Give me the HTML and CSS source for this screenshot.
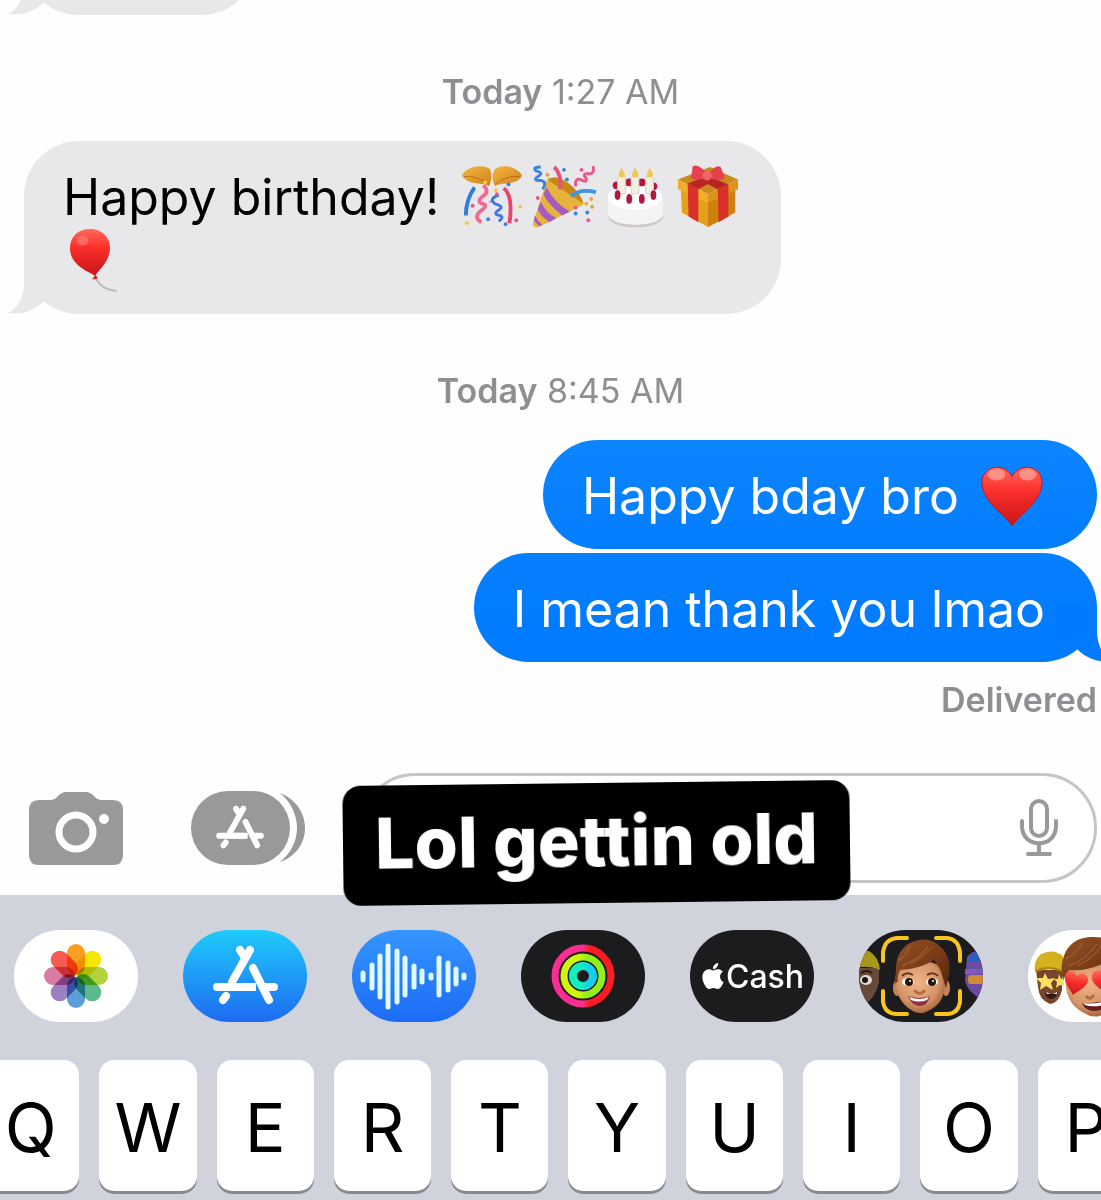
FILE: index.html
```html
<!DOCTYPE html>
<html lang="en">
<head>
  <meta charset="UTF-8" />
  <meta name="viewport" content="width=device-width, initial-scale=1.0"/>
  <title>Messages</title>
  <link rel="stylesheet" href="styles.css">
</head>
<body>
  <!-- Shared shapes -->
  <svg class="defs" width="0" height="0" aria-hidden="true">
    <symbol id="tail" viewBox="0 0 56 56">
      <path d="M16 0V24C16 40 10 50 0 55C14 57 26 53 36 43L56 30V0Z"/>
    </symbol>
    <symbol id="appstore" viewBox="30 15 65 60">
      <g fill="none" stroke="currentColor" stroke-width="8" stroke-linecap="round">
        <path d="M67 20L49 52M57 20L62 28M43 66L40 70M70 38L86 70M34 57H68M82 57H91"/>
        <path stroke-linecap="butt" d="M49 57H73"/>
      </g>
    </symbol>
    <symbol id="heart" viewBox="0 0 66 66">
      <path d="M33 64C27 53 3 40 2 20C1 3 24-4 33 13C42-4 65 3 64 20C63 40 39 53 33 64Z"/>
    </symbol>
    <linearGradient id="gold" x1="0" y1="0" x2="1" y2="1">
      <stop offset="0" stop-color="#f5b63f"/><stop offset="1" stop-color="#d0801c"/>
    </linearGradient>
    <linearGradient id="red" x1="0" y1="0" x2="0" y2="1">
      <stop offset="0" stop-color="#ff6a5c"/><stop offset=".4" stop-color="#fb2f2c"/><stop offset="1" stop-color="#c81518"/>
    </linearGradient>
    <radialGradient id="skin" cx=".45" cy=".4" r=".6">
      <stop offset="0" stop-color="#eeb488"/><stop offset=".7" stop-color="#d59468"/><stop offset="1" stop-color="#a9663d"/>
    </radialGradient>
    <linearGradient id="hair" x1="0" y1="0" x2="1" y2="1">
      <stop offset="0" stop-color="#935225"/><stop offset=".5" stop-color="#7b3d19"/><stop offset="1" stop-color="#54260f"/>
    </linearGradient>
  </svg>

  <div class="phone">
    <main class="thread">
      <div class="bubble received cut">
        <svg class="tail"><use href="#tail"/></svg>
      </div>

      <p class="time"><b>Today</b> 1:27 AM</p>

      <div class="bubble received">
        Happy birthday!
        <svg class="emoji" viewBox="0 0 66 66" role="img" aria-label="confetti ball">
          <path d="M2 11C5 3 20-2 31 4Q34 12 30 22C24 17 9 22 2 11Z" fill="url(#gold)"/>
          <path d="M64 11C60 3 46-2 36 4Q31 12 36 22C42 17 58 22 64 11Z" fill="url(#gold)"/>
          <path d="M4 12Q15 10 30 20M62 12Q49 10 36 20" fill="none" stroke="#b66e18" stroke-width="1"/>
          <g fill="none" stroke-width="4">
            <path d="M15 23Q6 36 6 52" stroke="#2e7de0"/>
            <path d="M45 24Q55 31 51 60" stroke="#e9426d"/>
            <path d="M24 21Q31 27 24 32Q16 38 24 40Q29 42 22 47Q13 54 22 59" stroke="#ef6b94"/>
            <path d="M40 31Q29 35 36 40Q47 43 39 47Q34 51 41 52Q46 54 40 58" stroke="#3c78dd" stroke-width="3"/>
          </g>
          <g fill="#f4c83d"><circle cx="26" cy="18" r="2"/><circle cx="7" cy="60" r="2"/><circle cx="37" cy="26" r="2"/><circle cx="62" cy="43" r="2"/></g>
          <g fill="#e85585"><circle cx="38" cy="30" r="2"/><circle cx="13" cy="42" r="2"/><circle cx="58" cy="57" r="2"/><circle cx="31" cy="38" r="1"/></g>
          <g fill="#3884e7"><circle cx="50" cy="20" r="2"/><circle cx="29" cy="56" r="2"/><circle cx="47" cy="61" r="2"/></g>
        </svg><svg class="emoji" viewBox="0 0 66 66" role="img" aria-label="party popper">
          <path d="M1 60L16 14Q20 10 37 24Q54 35 53 41L7 64Q1 66 1 60Z" fill="#e6b33c"/>
          <path d="M17 16L53 40Q51 29 38 19Q23 8 17 16Z" fill="#c88816"/>
          <path d="M12 30Q15 39 31 52L39 48Q24 40 15 23ZM6 46Q8 52 18 59L25 55Q15 50 9 38ZM2 56Q3 60 8 63L11 62Q6 58 3 52Z" fill="#a45bc4"/>
          <g fill="none" stroke-width="4">
            <path d="M23 2Q31 10 29 25" stroke="#e8517a"/>
            <path d="M9 2Q0 2 4 6Q13 8 6 12Q0 16 9 16Q16 17 11 25" stroke="#3b82e1" stroke-width="3"/>
            <path d="M40 32Q50 24 66 28" stroke="#3d94e0"/>
            <path d="M63 1Q65 10 58 9Q51 8 56 14Q57 19 50 15Q44 13 45 22" stroke="#e65a88" stroke-width="3"/>
          </g>
          <g fill="#e65a88"><circle cx="51" cy="5" r="2"/><circle cx="6" cy="34" r="2"/><circle cx="45" cy="44" r="2"/><circle cx="58" cy="57" r="2"/></g>
          <g fill="#3b82e1"><circle cx="33" cy="5" r="2"/><circle cx="36" cy="15" r="2"/><circle cx="57" cy="49" r="2"/><circle cx="45" cy="50" r="2"/></g>
          <g fill="#e6a63c"><circle cx="16" cy="10" r="2"/><circle cx="56" cy="40" r="2"/><circle cx="62" cy="43" r="2"/><circle cx="61" cy="35" r="2"/></g>
        </svg><svg class="emoji" viewBox="0 0 66 66" role="img" aria-label="birthday cake">
          <path d="M4 34V53C7 68 58 68 61 53V34Z" fill="#cfcaca"/>
          <path d="M4 34V51C7 65 58 65 61 51V34Z" fill="#f5f3f3"/>
          <ellipse cx="32" cy="33" rx="28" ry="13" fill="#fff"/>
          <g fill="#b51543"><circle cx="13" cy="21" r="4"/><circle cx="26" cy="18" r="4"/><circle cx="39" cy="18" r="4"/><circle cx="51" cy="22" r="4"/></g>
          <g fill="#f2efe0" stroke="#d4d0bf" stroke-width="1"><rect x="14" y="12" width="8" height="18" rx="2"/><rect x="28" y="12" width="8" height="18" rx="2"/><rect x="43" y="12" width="8" height="18" rx="2"/></g>
          <g fill="#efc94f"><path d="M18 3Q25 12 18 13Q12 12 18 3ZM32 3Q39 12 32 13Q26 12 32 3ZM47 3Q54 12 47 13Q41 12 47 3Z"/></g>
          <g fill="#b51543"><ellipse cx="14" cy="31" rx="3" ry="5"/><ellipse cx="26" cy="35" rx="3" ry="5"/><ellipse cx="39" cy="35" rx="3" ry="5"/><ellipse cx="51" cy="31" rx="3" ry="5"/></g>
        </svg><svg class="emoji" viewBox="0 0 66 66" role="img" aria-label="wrapped gift">
          <path d="M5 23L33 36V64L6 49ZM33 36L61 23V49L33 64Z" fill="#e5a01e"/>
          <path d="M33 36L61 23V49L33 64Z" fill="#cf8110"/>
          <path d="M2 15L35 2L64 15L33 30Z" fill="#cb8a1c"/>
          <path d="M2 15L33 30V39L2 25Z" fill="#f2ae2a"/><path d="M33 30L64 15V25L33 39Z" fill="#dc941c"/>
          <path d="M12 19L23 25V59L13 53ZM43 25L54 20V53L44 59Z" fill="#d93129"/>
          <path d="M12 19L43 7L50 10L23 25ZM22 7L54 20L43 25L18 12Z" fill="#b82624"/>
          <path d="M33 10C25-1 15-2 17 5L15 14Q24 17 33 12Q42 18 50 14L47 4C45-2 37 3 33 10Z" fill="#e6404a"/>
          <ellipse cx="32" cy="11" rx="5" ry="5" fill="#f2626a"/>
        </svg><svg class="emoji" viewBox="0 0 66 66" role="img" aria-label="balloon">
          <path d="M26 50C32 61 40 63 48 64" fill="none" stroke="#b8b9bc" stroke-width="2"/>
          <path d="M26 47L23 52L29 51Z" fill="#d3232d"/>
          <path d="M26 48C19 44 0 37 0 20C0 7 9 0 21 0C34 0 43 10 41 23C39 35 31 41 26 48Z" fill="url(#red)"/>
          <ellipse cx="13" cy="12" rx="6" ry="5" fill="#ff8d89" opacity=".5"/>
        </svg>
        <svg class="tail"><use href="#tail"/></svg>
      </div>

      <p class="time"><b>Today</b> 8:45 AM</p>

      <div class="bubble sent first">
        Happy bday bro
        <svg class="emoji" viewBox="0 0 66 66" role="img" aria-label="red heart">
          <use href="#heart" fill="url(#red)" stroke="#c71419" stroke-width="1"/>
          <ellipse cx="17" cy="11" rx="9" ry="6" fill="#ffb6ac" opacity=".6"/><ellipse cx="49" cy="11" rx="9" ry="6" fill="#ffb6ac" opacity=".6"/>
        </svg>
      </div>
      <div class="bubble sent">
        I mean thank you lmao
        <svg class="tail"><use href="#tail"/></svg>
      </div>
      <p class="status">Delivered</p>
    </main>

    <div class="compose">
      <button class="tool camera" aria-label="Camera">
        <svg width="95" height="73" viewBox="0 0 95 73">
          <path fill="#999" d="M10 8H21Q26 8 29 4Q33 0 37 0H57Q61 0 65 4Q68 8 73 8H84Q94 8 94 18V63Q94 73 84 73H10Q0 73 0 63V18Q0 8 10 8Z"/>
          <circle cx="47" cy="40" r="17" fill="none" stroke="#fff" stroke-width="7"/>
          <circle cx="75" cy="27" r="5" fill="#fff"/>
        </svg>
      </button>
      <button class="tool apps-toggle" aria-label="Apps">
        <svg width="114" height="74" viewBox="0 0 114 74">
          <rect width="99" height="74" rx="37" fill="#999"/>
          <path fill="#999" d="M89 2C104 8 114 21 114 37S104 66 89 71C99 63 106 51 106 37S99 10 89 2Z"/>
          <use href="#appstore" x="25" y="14" width="48" height="44" color="#fff"/>
        </svg>
      </button>
      <div class="field">
        <input type="text" aria-label="Message">
        <button class="mic" aria-label="Dictate">
          <svg width="38" height="58" viewBox="0 0 38 58" fill="none" stroke="#999" stroke-width="4" stroke-linecap="round">
            <rect x="11" y="2" width="16" height="35" rx="8"/>
            <path d="M2 22V27C2 50 36 50 36 27V22M19 45V55M8 55H30"/>
          </svg>
        </button>
      </div>
      <div class="caption">Lol gettin old</div>
    </div>

    <div class="keyboard">
      <div class="apps">
        <button class="app white" aria-label="Photos">
          <svg viewBox="0 0 124 92">
            <g class="petals" transform="translate(62 46)">
              <rect x="-9" y="-32" width="18" height="31" rx="9" fill="#fb9f22"/>
              <rect x="-9" y="-32" width="18" height="31" rx="9" fill="#f5e606" transform="rotate(45)"/>
              <rect x="-9" y="-32" width="18" height="31" rx="9" fill="#b3d33c" transform="rotate(90)"/>
              <rect x="-9" y="-32" width="18" height="31" rx="9" fill="#5cb98b" transform="rotate(135)"/>
              <rect x="-9" y="-32" width="18" height="31" rx="9" fill="#5a9fda" transform="rotate(180)"/>
              <rect x="-9" y="-32" width="18" height="31" rx="9" fill="#9a80c2" transform="rotate(225)"/>
              <rect x="-9" y="-32" width="18" height="31" rx="9" fill="#d87ba5" transform="rotate(270)"/>
              <rect x="-9" y="-32" width="18" height="31" rx="9" fill="#f65b50" transform="rotate(315)"/>
            </g>
          </svg>
        </button>
        <button class="app store" aria-label="App Store">
          <svg viewBox="0 0 124 92"><use href="#appstore" x="30" y="15" width="65" height="60" color="#fff"/></svg>
        </button>
        <button class="app audio" aria-label="Audio">
          <svg viewBox="0 0 124 92" fill="none" stroke="#dffaff" stroke-width="5" stroke-linecap="round">
            <path d="M11 43V50M20 35V58M28 26V67M36 16V77M45 21V72M53 28V65M62 36V57M70 41V52M79 45V48M87 28V65M96 33V60M104 39V54M112 45V48"/>
          </svg>
        </button>
        <button class="app dark" aria-label="Fitness">
          <svg viewBox="0 0 124 92" fill="none">
            <linearGradient id="move"><stop offset=".5" stop-color="#fb2d92"/><stop offset=".6" stop-color="#fb1d22"/></linearGradient>
            <linearGradient id="exercise"><stop offset=".4" stop-color="#cdf50e"/><stop offset=".6" stop-color="#93ee1b"/></linearGradient>
            <linearGradient id="stand"><stop offset=".4" stop-color="#12efbd"/><stop offset=".8" stop-color="#17cdeb"/></linearGradient>
            <circle cx="62" cy="46" r="28" stroke="url(#move)" stroke-width="7"/>
            <circle cx="62" cy="46" r="19" stroke="url(#exercise)" stroke-width="7"/>
            <circle cx="62" cy="46" r="10" stroke="url(#stand)" stroke-width="8"/>
          </svg>
        </button>
        <button class="app dark cash" aria-label="Apple Cash">
          <svg class="apple" viewBox="0 0 24 24" fill="#fff"><path d="M12.152 6.896c-.948 0-2.415-1.078-3.96-1.04-2.04.027-3.91 1.183-4.961 3.014-2.117 3.675-.546 9.103 1.519 12.09 1.013 1.454 2.208 3.09 3.792 3.039 1.52-.065 2.09-.987 3.935-.987 1.831 0 2.35.987 3.96.948 1.637-.026 2.676-1.48 3.676-2.948 1.156-1.688 1.636-3.325 1.662-3.415-.039-.013-3.182-1.221-3.22-4.857-.026-3.04 2.48-4.494 2.597-4.559-1.429-2.09-3.623-2.324-4.39-2.376-2-.156-3.675 1.09-4.61 1.09zM15.53 3.83c.843-1.012 1.4-2.427 1.245-3.83-1.207.052-2.662.805-3.532 1.818-.78.896-1.454 2.338-1.273 3.714 1.338.104 2.715-.688 3.559-1.701"/></svg>
          <span>Cash</span>
        </button>
        <button class="app dark" aria-label="Memoji">
          <svg viewBox="0 0 124 92">
            <!-- side faces -->
            <path d="M-12 38H20V52Q16 69 6 74L-10 66Z" fill="#674a39"/>
            <path d="M-10 39Q-4 20 10 21Q20 27 21 40Q8 34-10 39Z" fill="#a9971d"/>
            <ellipse cx="7" cy="50" rx="6" ry="5" fill="#ddd"/><circle cx="6" cy="50" r="3" fill="#231510"/>
            <path d="M2 43Q8 39 13 43" stroke="#2b1a11" stroke-width="2" fill="none"/>
            <path d="M108 27Q117 17 130 23V72Q110 66 106 51Z" fill="#6b4ca2"/>
            <path d="M108 32Q112 20 125 22V32Z" fill="#2860bf"/>
            <rect x="109" y="45" width="17" height="9" rx="3" fill="#cf8a35"/>
            <path d="M106 39H125V44H106Z" fill="#8259ba"/>
            <!-- main face -->
            <ellipse cx="38" cy="58" rx="4" ry="8" fill="#c78257"/><ellipse cx="87" cy="58" rx="4" ry="8" fill="#c78257"/>
            <path d="M37 38Q61 24 86 38V56Q85 74 69 81Q60 86 52 80Q38 71 37 54Z" fill="url(#skin)"/>
            <path d="M36 54Q35 48 37 42Q36 23 49 14Q68 4 81 16Q93 27 90 45L87 58L83 45Q82 39 75 30Q61 39 41 40Q38 46 39 51Z" fill="url(#hair)"/>
            <path d="M43 36Q61 29 69 16M52 34Q65 26 73 17M39 31Q47 26 51 16" fill="none" stroke="#aa6737" stroke-width="1"/>
            <path d="M43 46Q48 41 54 45M68 45Q74 41 79 46" stroke="#68351b" stroke-width="2" fill="none"/>
            <ellipse cx="49" cy="52" rx="6" ry="4" fill="#fff"/><ellipse cx="73" cy="52" rx="6" ry="4" fill="#fff"/>
            <circle cx="50" cy="52" r="4" fill="#28150d"/><circle cx="73" cy="52" r="4" fill="#28150d"/>
            <circle cx="51" cy="51" r="1" fill="#fff"/><circle cx="74" cy="51" r="1" fill="#fff"/>
            <path d="M56 61Q61 66 65 61" stroke="#b66a41" stroke-width="3" fill="none" stroke-linecap="round"/>
            <path d="M49 66Q60 70 71 66Q69 76 60 76Q52 75 49 66Z" fill="#8e3440"/>
            <path d="M50 67Q60 71 70 67L68 70Q60 73 52 70Z" fill="#fff"/>
            <path d="M24 31V22Q26 9 38 8H48M77 8H88Q99 9 101 22V31M24 61V72Q26 84 38 84H48M77 84H88Q99 84 101 72V61" fill="none" stroke="#f7c51d" stroke-width="4" stroke-linecap="round"/>
          </svg>
        </button>
        <button class="app white" aria-label="Stickers">
          <svg viewBox="0 0 124 92">
            <path d="M8 40H34V60Q31 73 22 74Q11 70 10 57Z" fill="#76452a"/>
            <path d="M7 42Q5 31 13 24Q25 18 35 26V41Q20 37 7 42Z" fill="#d4b11f"/>
            <path d="M8 41Q20 35 34 41" fill="none" stroke="#a78312" stroke-width="2"/>
            <path d="M17 43L20 49L27 48L23 53L25 60L18 56L12 60L13 53L8 48L15 48ZM31 44L33 49H36V56L32 55L28 58L29 52L26 49H30Z" fill="#ffe061"/>
            <path d="M17 62Q23 65 30 62Q28 69 23 69Q18 69 17 62Z" fill="#351613"/><path d="M18 62Q24 66 29 62V64H19Z" fill="#fff"/>
            <path d="M37 38Q62 24 92 40V57Q89 77 74 85Q65 89 56 83Q40 75 38 57Z" fill="url(#skin)"/>
            <path d="M35 50Q31 35 38 21Q47 6 66 7Q86 7 94 25Q96 39 91 57Q85 47 82 30Q61 42 41 40Z" fill="url(#hair)"/>
            <path d="M40 36Q57 31 69 14M49 36Q68 27 74 14M38 29Q48 24 54 13" fill="none" stroke="#aa6737" stroke-width="1"/>
            <use href="#heart" x="35" y="41" width="25" height="25" transform="rotate(12 47 53)" fill="url(#red)"/>
            <use href="#heart" x="64" y="38" width="28" height="28" transform="rotate(-10 78 53)" fill="url(#red)"/>
            <path d="M58 66Q62 71 66 65" fill="none" stroke="#b66a41" stroke-width="3"/>
            <path d="M54 73Q67 74 81 69Q78 81 67 81Q57 81 54 73Z" fill="#6c1c20"/><path d="M55 73Q67 75 80 70L78 74Q66 78 57 75Z" fill="#fff"/>
          </svg>
        </button>
      </div>
      <div class="keys">
        <button>Q</button>
        <button>W</button>
        <button>E</button>
        <button>R</button>
        <button>T</button>
        <button>Y</button>
        <button>U</button>
        <button>I</button>
        <button>O</button>
        <button>P</button>
      </div>
    </div>
  </div>
</body>
</html>
```
FILE: styles.css
```css
* {
  box-sizing: border-box;
}

body {
  margin: 0;
  background: #fefefe;
  font-family: Inter, "Liberation Sans", sans-serif;
  color: #000;
}

button {
  padding: 0;
  border: none;
  background: none;
  font-family: inherit;
  color: inherit;
  flex-shrink: 0;
}

svg {
  display: block;
}

.defs {
  position: absolute;
}

.phone {
  min-height: 100vh;
  overflow: hidden;
  display: flex;
  flex-direction: column;
}

/* Conversation */
.thread {
  display: flex;
  flex-direction: column;
  align-items: flex-start;
  padding: 0 4px 0 24px;
}

.bubble {
  position: relative;
  min-height: 109px;
  padding: 24px 32px 21px 39px;
  border-radius: 55px;
  font-size: 50px;
  line-height: 64px;
}

.received {
  max-width: 757px;
  background: #e8e8ea;
}

.cut {
  width: 232px;
  margin-top: -94px;
}

.sent {
  align-self: flex-end;
  padding-right: 52px;
  margin-top: 4px;
  color: #fff;
  background: linear-gradient(#067fff, #007aff);
}

.sent.first {
  margin-top: 0;
  background: linear-gradient(#0d84ff, #037eff);
}

.tail {
  position: absolute;
  left: -16px;
  bottom: 0;
  width: 56px;
  height: 56px;
  fill: #e8e8ea;
}

.sent .tail {
  left: auto;
  right: -16px;
  fill: #007bff;
  transform: scaleX(-1);
}

.emoji {
  display: inline-block;
  width: 66px;
  height: 64px;
  margin-left: 6px;
  vertical-align: top;
}

.time {
  align-self: center;
  margin: 57px 0 29px;
  font-size: 34px;
  line-height: 40px;
  color: #8e8e93;
}

.time b {
  font-weight: 600;
}

.status {
  align-self: flex-end;
  margin: 18px 0 0;
  font-size: 34px;
  font-weight: 600;
  line-height: 40px;
  color: #8e8e93;
}

/* Message field */
.compose {
  position: relative;
  display: flex;
  align-items: center;
  padding: 53px 4px 12px 29px;
}

.camera {
  margin-right: 67px;
}

.apps-toggle {
  margin-right: 55px;
}

.field {
  flex: 1;
  min-width: 0;
  display: flex;
  align-items: center;
  height: 110px;
  padding: 0 36px;
  border: 3px solid #c5c5c8;
  border-radius: 55px;
  background: #fff;
}

.field input {
  flex: 1;
  min-width: 0;
  border: none;
  outline: none;
  background: none;
  font: 50px Inter, sans-serif;
}

.caption {
  position: absolute;
  left: 343px;
  bottom: -8px;
  padding: 19px 32px 23px;
  border-radius: 18px;
  font-size: 70px;
  font-weight: 800;
  line-height: 78px;
  color: #fff;
  background: #000;
  transform: rotate(-0.7deg);
  z-index: 1;
}

/* Keyboard */
.keyboard {
  flex: 1;
  padding: 35px 0 9px;
  background: #d0d3dc;
}

.apps {
  display: flex;
  gap: 45px;
  padding-left: 14px;
}

.app {
  width: 124px;
  height: 92px;
  border-radius: 46px;
  overflow: hidden;
}

.white {
  background: #fff;
}

.dark {
  background: #1c1c1e;
}

.store {
  background: linear-gradient(#1fcbfb, #1e6bf1);
}

.audio {
  background: linear-gradient(#3595ff, #1d6cf5);
}

.petals {
  isolation: isolate;
}

.petals rect {
  mix-blend-mode: multiply;
}

.cash {
  display: flex;
  align-items: center;
  justify-content: center;
  font-size: 32px;
  font-weight: 500;
  color: #fff;
}

.apple {
  width: 26px;
  height: 28px;
}

.keys {
  display: flex;
  gap: 20px;
  margin: 38px -34px 0 -18px;
}

.keys button {
  flex: 1;
  height: 131px;
  padding-top: 2px;
  border-radius: 15px;
  font-size: 68px;
  background: #fff;
  box-shadow: 0 3px 0 #898a90;
}
```
